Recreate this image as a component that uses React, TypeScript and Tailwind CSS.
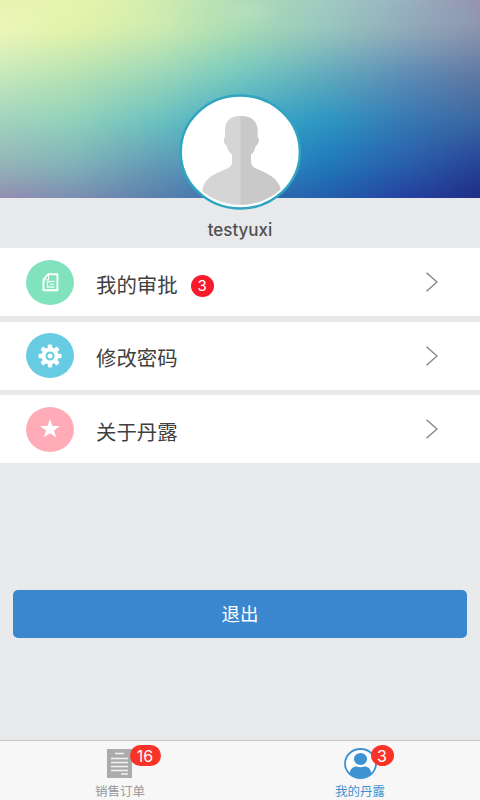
import type { ReactNode } from "react";

const font = "font-['Inter','Noto_Sans_CJK_SC',sans-serif]";

// Horizontal colour bands of the cover, blended into each other from top to bottom.
const bands = [
  { y: 0, colors: "#e6f1b0,#e9f6ad,#d4eeb0,#b0dcb7,#a2cdc3,#9bb4c2,#9a8cb0" },
  { y: 38, colors: "#eff7bc,#e2f3a9,#cdebb0,#a8dcb4,#98c6be,#90aab9,#8c90ac" },
  { y: 78, colors: "#c8eabc,#b6e2b4,#9cd7b8,#74c8c0,#60abbd,#5c8bb5,#5f749f" },
  { y: 120, colors: "#a2d2bf,#90d1bb,#6ac1c0,#40a8c4,#2b96c4,#3577b3,#3a629d" },
  { y: 160, colors: "#98b3b8,#80b0b8,#6298b5,#3a8fc0,#2078ba,#285caa,#263c92" },
  { y: 198, colors: "#967fae,#7b80af,#5878a8,#3560a8,#2456a8,#24369a,#1c2479" },
];

function Cover() {
  return (
    <div className="grid h-[198px] w-full overflow-hidden">
      <div className="col-start-1 row-start-1 grid h-[198px] w-full scale-x-[1.05] scale-y-[1.12] blur-[5px]">
        {bands.map((b, i) => {
          const mask = i
            ? `linear-gradient(to bottom, transparent ${bands[i - 1].y}px, #000 ${b.y}px)`
            : undefined;
          return (
            <div
              key={b.y}
              className="col-start-1 row-start-1 h-full w-full"
              style={{ backgroundImage: `linear-gradient(to right, ${b.colors})`, maskImage: mask }}
            />
          );
        })}
      </div>
      {/* faint clouds along the top edge */}
      <svg className="z-10 col-start-1 row-start-1 h-[198px] w-full" viewBox="0 0 480 198" preserveAspectRatio="none">
        <defs>
          <radialGradient id="cloud">
            <stop offset="0" stopColor="#c4e6c6" stopOpacity=".45" />
            <stop offset="1" stopColor="#c4e6c6" stopOpacity="0" />
          </radialGradient>
          <radialGradient id="haze">
            <stop offset="0" stopColor="#8ea2bb" stopOpacity=".6" />
            <stop offset="1" stopColor="#8ea2bb" stopOpacity="0" />
          </radialGradient>
        </defs>
        <ellipse cx="245" cy="12" rx="36" ry="15" fill="url(#cloud)" />
        <ellipse cx="458" cy="18" rx="26" ry="13" fill="url(#haze)" />
      </svg>
    </div>
  );
}

function Avatar() {
  return (
    <svg className="absolute left-[179px] top-[93px] z-20 h-[117px] w-[123px]" viewBox="0 0 123 117">
      <defs>
        <clipPath id="face">
          <ellipse cx="61.3" cy="58" rx="57.500" ry="53.8" />
        </clipPath>
      </defs>
      <ellipse cx="61.3" cy="59" rx="59.6" ry="56.5" fill="#fff" stroke="#2fa5c2" strokeWidth="2.5" />
      <g clipPath="url(#face)">
        <path
          d="M61.5 23C50 23 46 29 46 38v6.500c-2.500 1-1 7.500 2 8.500 .5 4 2 6 5 8.500v7c0 5-3 6.500-8 8.500C31 82 23 89 23 100v17h79v-17c0-11-9-18-22-23-5-2-8-3.500-8-8.500v-7c3-2.500 4-4.500 4.500-8.500 3-1 4.500-7.500 2-8.500V38c0-9-5-15-17-15Z"
          fill="#d5d5d5"
        />
        <path
          d="M61.5 23v94H102v-17c0-11-9-18-22-23-5-2-8-3.500-8-8.500v-7c3-2.500 4-4.500 4.500-8.500 3-1 4.500-7.500 2-8.500V38c0-9-5-15-17-15Z"
          fill="#c9c9c9"
        />
      </g>
    </svg>
  );
}

function DocIcon() {
  return (
    <svg className="h-[19px] w-[17px]" viewBox="0 0 17 19" fill="none" stroke="#fff" strokeWidth="1.9">
      <path d="M6 1.300h9.400v16H1.500V6.500Z" strokeLinejoin="round" />
      <path d="M6.500 1.500v5.300H2" strokeWidth="1" />
      <path d="M12.500 8.500H5.500v5.500h7M8 11.300h4" strokeWidth="1.300" strokeOpacity=".85" />
    </svg>
  );
}

function GearIcon() {
  return (
    <svg className="h-6 w-6" viewBox="-12 -12 24 24">
      <g fill="#fff">
        {[0, 45, 90, 135].map((a) => (
          <rect key={a} x="-2.200" y="-11.500" width="4.400" height="23" rx="1" transform={`rotate(${a})`} />
        ))}
        <circle r="8.500" />
      </g>
      <circle r="3.500" fill="none" stroke="#67cbe2" strokeWidth="2" />
    </svg>
  );
}

function StarIcon() {
  return (
    <svg className="h-5 w-5" viewBox="0 0 20 20" fill="#fff">
      <path d="M10 0l2.500 7H20l-6 4.400 2.200 7.200L10 14.300l-6.200 4.300L6 11.400 0 7h7.500Z" />
    </svg>
  );
}

function Row({ label, color, icon, badge }: { label: string; color: string; icon: ReactNode; badge?: string }) {
  return (
    <div className="flex h-[68px] items-center bg-white pl-[26px] pr-[42px]">
      <div className={`flex h-[45px] w-[48px] items-center justify-center rounded-[50%] ${color}`}>{icon}</div>
      <span className="ml-[22px] mt-[7px] text-[20.4px] leading-7 text-[#404040]">{label}</span>
      {badge && (
        <span className="ml-[13px] mt-[7px] flex h-[22px] w-[23px] items-center justify-center rounded-[50%] bg-[#f91a2c] pt-px text-[15px] text-white">
          {badge}
        </span>
      )}
      <svg className="ml-auto h-5 w-3" viewBox="0 0 12 20" fill="none" stroke="#888" strokeWidth="1.500">
        <path d="M.5 .7 11 10 .5 19.300" />
      </svg>
    </div>
  );
}

function OrderIcon() {
  return (
    <svg className="h-[29px] w-[25px]" viewBox="0 0 25 29">
      <path d="M0 0h25v29H0Z" fill="#ababab" />
      <path d="M8 4.500h9M4 9.500h17M4 13.500h17M4 17.500h17M4 21.500h17M14 25h7" stroke="#f2f2f2" strokeWidth="1.300" />
    </svg>
  );
}

function UserIcon() {
  return (
    <svg className="h-[31px] w-[33px]" viewBox="0 0 33 31">
      <clipPath id="user">
        <ellipse cx="16.500" cy="15.500" rx="15.500" ry="14.500" />
      </clipPath>
      <ellipse cx="16.500" cy="15.500" rx="15.500" ry="14.500" fill="#fff" stroke="#3e92d1" strokeWidth="1.800" />
      <g fill="#3e92d1" clipPath="url(#user)">
        <ellipse cx="16.500" cy="11" rx="6.600" ry="6" />
        <path d="M6 31v-6c0-4 3-6.500 6.500-6.500 2.500 1 5.500 1 8 0C24 18.500 27 21 27 25v6Z" />
      </g>
    </svg>
  );
}

export default function App() {
  return (
    <div className={`relative flex h-[800px] w-[480px] flex-col overflow-hidden bg-[#e8e9eb] ${font}`}>
      <Cover />
      <Avatar />
      <div className="flex h-[50px] items-center justify-center pt-[15px] text-[17px] font-medium text-[#505050]">
        testyuxi
      </div>
      <div className="flex flex-col gap-[5.700px]">
        <Row label="我的审批" color="bg-[#81e2be]" icon={<DocIcon />} badge="3" />
        <Row label="修改密码" color="bg-[#67cbe2]" icon={<GearIcon />} />
        <Row label="关于丹露" color="bg-[#ffabb8]" icon={<StarIcon />} />
      </div>
      <button className="mx-[13px] mt-[126.200px] h-[48px] rounded-[5px] bg-[#3a87d0] pt-[3px] text-[18.500px] text-white">
        退出
      </button>
      <nav className="mt-auto grid h-[60px] grid-cols-2 border-t border-[#c4c5c7] bg-[#f7f7f7] text-[12.500px]">
        <div className="flex flex-col items-center pt-[8px] text-[#999]">
          <div className="relative right-px h-[31px]">
            <OrderIcon />
            <span className="absolute -top-[4px] left-[23px] flex h-[21px] w-[31px] items-center justify-center rounded-full bg-[#fa3329] text-[16px] text-white">
              16
            </span>
          </div>
          <span className="mt-[3px] leading-[18px]">销售订单</span>
        </div>
        <div className="flex flex-col items-center pt-[7px] text-[#3e92d1]">
          <div className="relative h-[31px]">
            <UserIcon />
            <span className="absolute -top-[3px] left-[27px] flex h-[21px] w-[23px] items-center justify-center rounded-[50%] bg-[#fa3329] text-[16px] text-white">
              3
            </span>
          </div>
          <span className="mt-[4px] leading-[18px]">我的丹露</span>
        </div>
      </nav>
    </div>
  );
}
